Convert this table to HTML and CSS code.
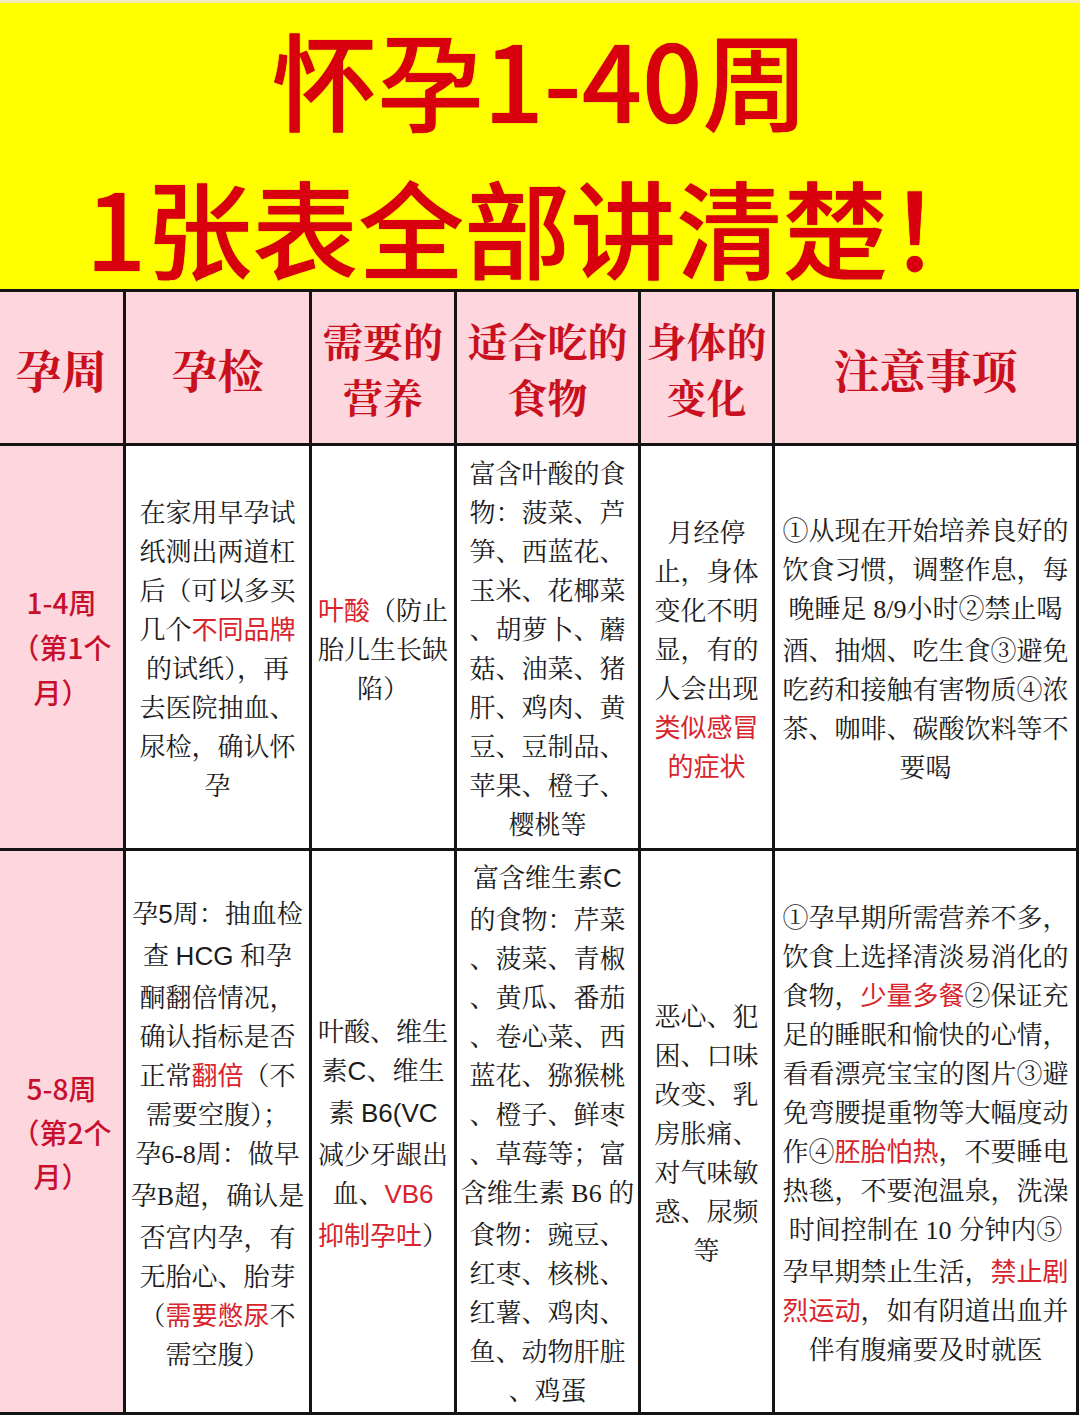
FILE: index.html
```html
<!DOCTYPE html>
<html lang="zh-CN">
<head>
<meta charset="utf-8">
<title>怀孕1-40周 1张表全部讲清楚！</title>
<link rel="stylesheet" href="styles.css">
</head>
<body>
<div class="page">
  <header class="banner">
    <div class="title-line first">怀孕1-40周</div>
    <div class="title-line second">1张表全部讲清楚！</div>
  </header>

  <div class="table">
    <div class="cell head week"><span class="h-big">孕周</span></div>
    <div class="cell head"><span class="h-big">孕检</span></div>
    <div class="cell head"><span class="h-two">需要的<br>营养</span></div>
    <div class="cell head"><span class="h-two">适合吃的<br>食物</span></div>
    <div class="cell head"><span class="h-two">身体的<br>变化</span></div>
    <div class="cell head"><span class="h-big">注意事项</span></div>

    <div class="cell week"><span class="wk">1-4周<br>（第1个<br>月）</span></div>
    <div class="cell"><p class="txt">在家用早孕试<br>纸测出两道杠<br>后（可以多买<br>几个<span class="hl">不同品牌</span><br>的试纸），再<br>去医院抽血、<br>尿检，确认怀<br>孕</p></div>
    <div class="cell"><p class="txt"><span class="hl">叶酸</span>（防止<br>胎儿生长缺<br>陷）</p></div>
    <div class="cell"><p class="txt">富含叶酸的食<br>物：菠菜、芦<br>笋、西蓝花、<br>玉米、花椰菜<br>、胡萝卜、蘑<br>菇、油菜、猪<br>肝、鸡肉、黄<br>豆、豆制品、<br>苹果、橙子、<br>樱桃等</p></div>
    <div class="cell"><p class="txt">月经停<br>止，身体<br>变化不明<br>显，有的<br>人会出现<br><span class="hl">类似感冒</span><br><span class="hl">的症状</span></p></div>
    <div class="cell"><p class="txt">①从现在开始培养良好的<br>饮食习惯，调整作息，每<br>晚睡足 <span class="lat">8/9</span>小时②禁止喝<br>酒、抽烟、吃生食③避免<br>吃药和接触有害物质④浓<br>茶、咖啡、碳酸饮料等不<br>要喝</p></div>

    <div class="cell week"><span class="wk wk2">5-8周<br>（第2个<br>月）</span></div>
    <div class="cell"><p class="txt">孕<span class="sans">5</span>周：抽血检<br>查 <span class="sans">HCG</span> 和孕<br>酮翻倍情况，<br>确认指标是否<br>正常<span class="hl">翻倍</span>（不<br>需要空腹）；<br>孕<span class="lat">6-8</span>周：做早<br>孕<span class="lat">B</span>超，确认是<br>否宫内孕，有<br>无胎心、胎芽<br>（<span class="hl">需要憋尿</span>不<br>需空腹）</p></div>
    <div class="cell"><p class="txt">叶酸、维生<br>素<span class="sans">C</span>、维生<br>素 <span class="sans">B6(VC</span><br>减少牙龈出<br>血、<span class="hl sans">VB6</span><br><span class="hl">抑制孕吐</span>）</p></div>
    <div class="cell"><p class="txt">富含维生素<span class="sans">C</span><br>的食物：芹菜<br>、菠菜、青椒<br>、黄瓜、番茄<br>、卷心菜、西<br>蓝花、猕猴桃<br>、橙子、鲜枣<br>、草莓等；富<br>含维生素 <span class="lat">B6</span> 的<br>食物：豌豆、<br>红枣、核桃、<br>红薯、鸡肉、<br>鱼、动物肝脏<br>、鸡蛋</p></div>
    <div class="cell"><p class="txt">恶心、犯<br>困、口味<br>改变、乳<br>房胀痛、<br>对气味敏<br>惑、尿频<br>等</p></div>
    <div class="cell"><p class="txt">①孕早期所需营养不多，<br>饮食上选择清淡易消化的<br>食物，<span class="hl">少量多餐</span>②保证充<br>足的睡眠和愉快的心情，<br>看看漂亮宝宝的图片③避<br>免弯腰提重物等大幅度动<br>作④<span class="hl">胚胎怕热</span>，不要睡电<br>热毯，不要泡温泉，洗澡<br>时间控制在 <span class="lat">10</span> 分钟内⑤<br>孕早期禁止生活，<span class="hl">禁止剧</span><br><span class="hl">烈运动</span>，如有阴道出血并<br>伴有腹痛要及时就医</p></div>
  </div>
</div>
</body>
</html>
```

FILE: styles.css
```css
* {
  box-sizing: border-box;
}

html, body {
  margin: 0;
  padding: 0;
  background: #ffffff;
}

.page {
  width: 1080px;
  font-family: "Noto Serif CJK SC", "Noto Sans CJK SC", serif;
}

.banner {
  height: 289px;
  background: #ffff00;
  border-top: 3px solid #f1ecb8;
  padding-top: 14px;
  display: flex;
  flex-direction: column;
  align-items: center;
  gap: 28px;
}

.title-line {
  font-family: "Noto Sans CJK SC", sans-serif;
  font-weight: 500;
  font-size: 106px;
  line-height: 120px;
  height: 120px;
  color: #d8000c;
  white-space: nowrap;
  text-shadow: 0 0 1px #b00000;
}

.table {
  display: grid;
  grid-template-columns: 123px 183px 142px 181px 131px 301px;
  grid-template-rows: 151px 402px 561px;
  gap: 3px;
  padding: 3px 3px 3px 0;
  width: 1079px;
  background: #141414;
}

.cell {
  background: #ffffff;
  display: flex;
  align-items: center;
  justify-content: center;
  text-align: center;
  overflow: hidden;
}

.cell.head,
.cell.week {
  background: #fdd7dd;
}

.head {
  color: #c8101e;
  font-weight: 700;
  font-family: "Noto Serif CJK SC", "Noto Sans CJK SC", serif;
}

.h-big {
  font-size: 46px;
  line-height: 56px;
  white-space: nowrap;
}

.h-two {
  font-size: 40px;
  line-height: 56px;
  white-space: nowrap;
}

.wk {
  font-family: "Noto Sans CJK SC", sans-serif;
  font-size: 28px;
  line-height: 45px;
  font-weight: 500;
  color: #c8102e;
  white-space: nowrap;
}

.wk2 {
  line-height: 44px;
}

.txt {
  margin: 0;
  font-size: 26px;
  line-height: 39px;
  color: #1c1c1c;
  white-space: nowrap;
}

.hl {
  color: #d8242c;
  font-family: "Noto Sans CJK SC", sans-serif;
}

.sans {
  font-family: "Liberation Sans", "Noto Sans CJK SC", sans-serif;
}

.lat {
  font-family: "Liberation Serif", "Noto Serif CJK SC", serif;
}
```
